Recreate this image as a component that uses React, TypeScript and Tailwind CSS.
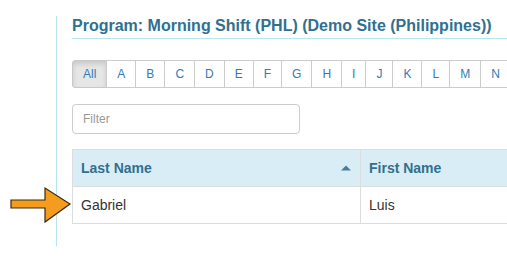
import React from "react";

const letters = ["All", "A", "B", "C", "D", "E", "F", "G", "H", "I", "J", "K", "L", "M", "N", "O"];

function Arrow() {
  return (
    <svg className="absolute left-[9px] top-[186px]" width="64" height="38" viewBox="0 0 64 38">
      <path
        d="M2 14 L36 14 L36 2 L61 18 L36 36 L36 22 L2 22 Z"
        fill="#f39c1e"
        stroke="#3a2a10"
        strokeWidth="1.2"
        strokeLinejoin="miter"
      />
    </svg>
  );
}

export default function App() {
  return (
    <div className="relative w-[507px] h-[261px] overflow-hidden bg-white font-['Liberation_Sans',Arial,sans-serif]">
      <div className="ml-[56px] mt-[20px] h-[230px] w-[720px] border-l border-[#b4e6ef] pl-[15px]">
        <h2 className="-mt-[4px] pb-[3px] border-b border-[#b4e6ef] text-[16px] leading-[19px] font-bold text-[#31708f]">
          Program: Morning Shift (PHL) (Demo Site (Philippines))
        </h2>

        <div className="mt-[21px] flex">
          {letters.map((l, i) => (
            <div
              key={l}
              className={
                i === 0
                  ? "px-[10px] py-[4px] text-[12px] leading-[18px] text-[#337ab7] border border-[#c8c8c8] rounded-l-[3px] bg-[#e6e6e6] shadow-[inset_0_3px_5px_rgba(0,0,0,0.125)]"
                  : "-ml-px px-[10px] py-[4px] text-[12px] leading-[18px] text-[#337ab7] border border-[#cccccc] bg-white"
              }
            >
              {l}
            </div>
          ))}
        </div>

        <input
          className="mt-[16px] block w-[228px] h-[30px] px-[10px] text-[12px] border border-[#cccccc] rounded-[4px] text-[#555] placeholder:text-[#999] outline-none"
          placeholder="Filter"
        />

        <table className="mt-[15px] w-[600px] border-collapse">
          <thead>
            <tr className="bg-[#d9edf7]">
              <th className="w-[288px] border border-[#dddddd] px-[8px] py-[8px] text-left text-[14px] leading-[20px] font-bold text-[#31708f]">
                <div className="flex items-center justify-between">
                  <span>Last Name</span>
                  <svg width="10" height="6" viewBox="0 0 10 6" className="mr-[1px]">
                    <path d="M0 5.5 L5 0.5 L10 5.5 Z" fill="#4a7d9c" />
                  </svg>
                </div>
              </th>
              <th className="border border-[#dddddd] px-[8px] py-[8px] text-left text-[14px] leading-[20px] font-bold text-[#31708f]">
                First Name
              </th>
            </tr>
          </thead>
          <tbody>
            <tr>
              <td className="border border-[#dddddd] px-[8px] py-[8px] text-[14px] leading-[20px] text-[#333]">Gabriel</td>
              <td className="border border-[#dddddd] px-[8px] py-[8px] text-[14px] leading-[20px] text-[#333]">Luis</td>
            </tr>
          </tbody>
        </table>
      </div>
      <Arrow />
    </div>
  );
}
